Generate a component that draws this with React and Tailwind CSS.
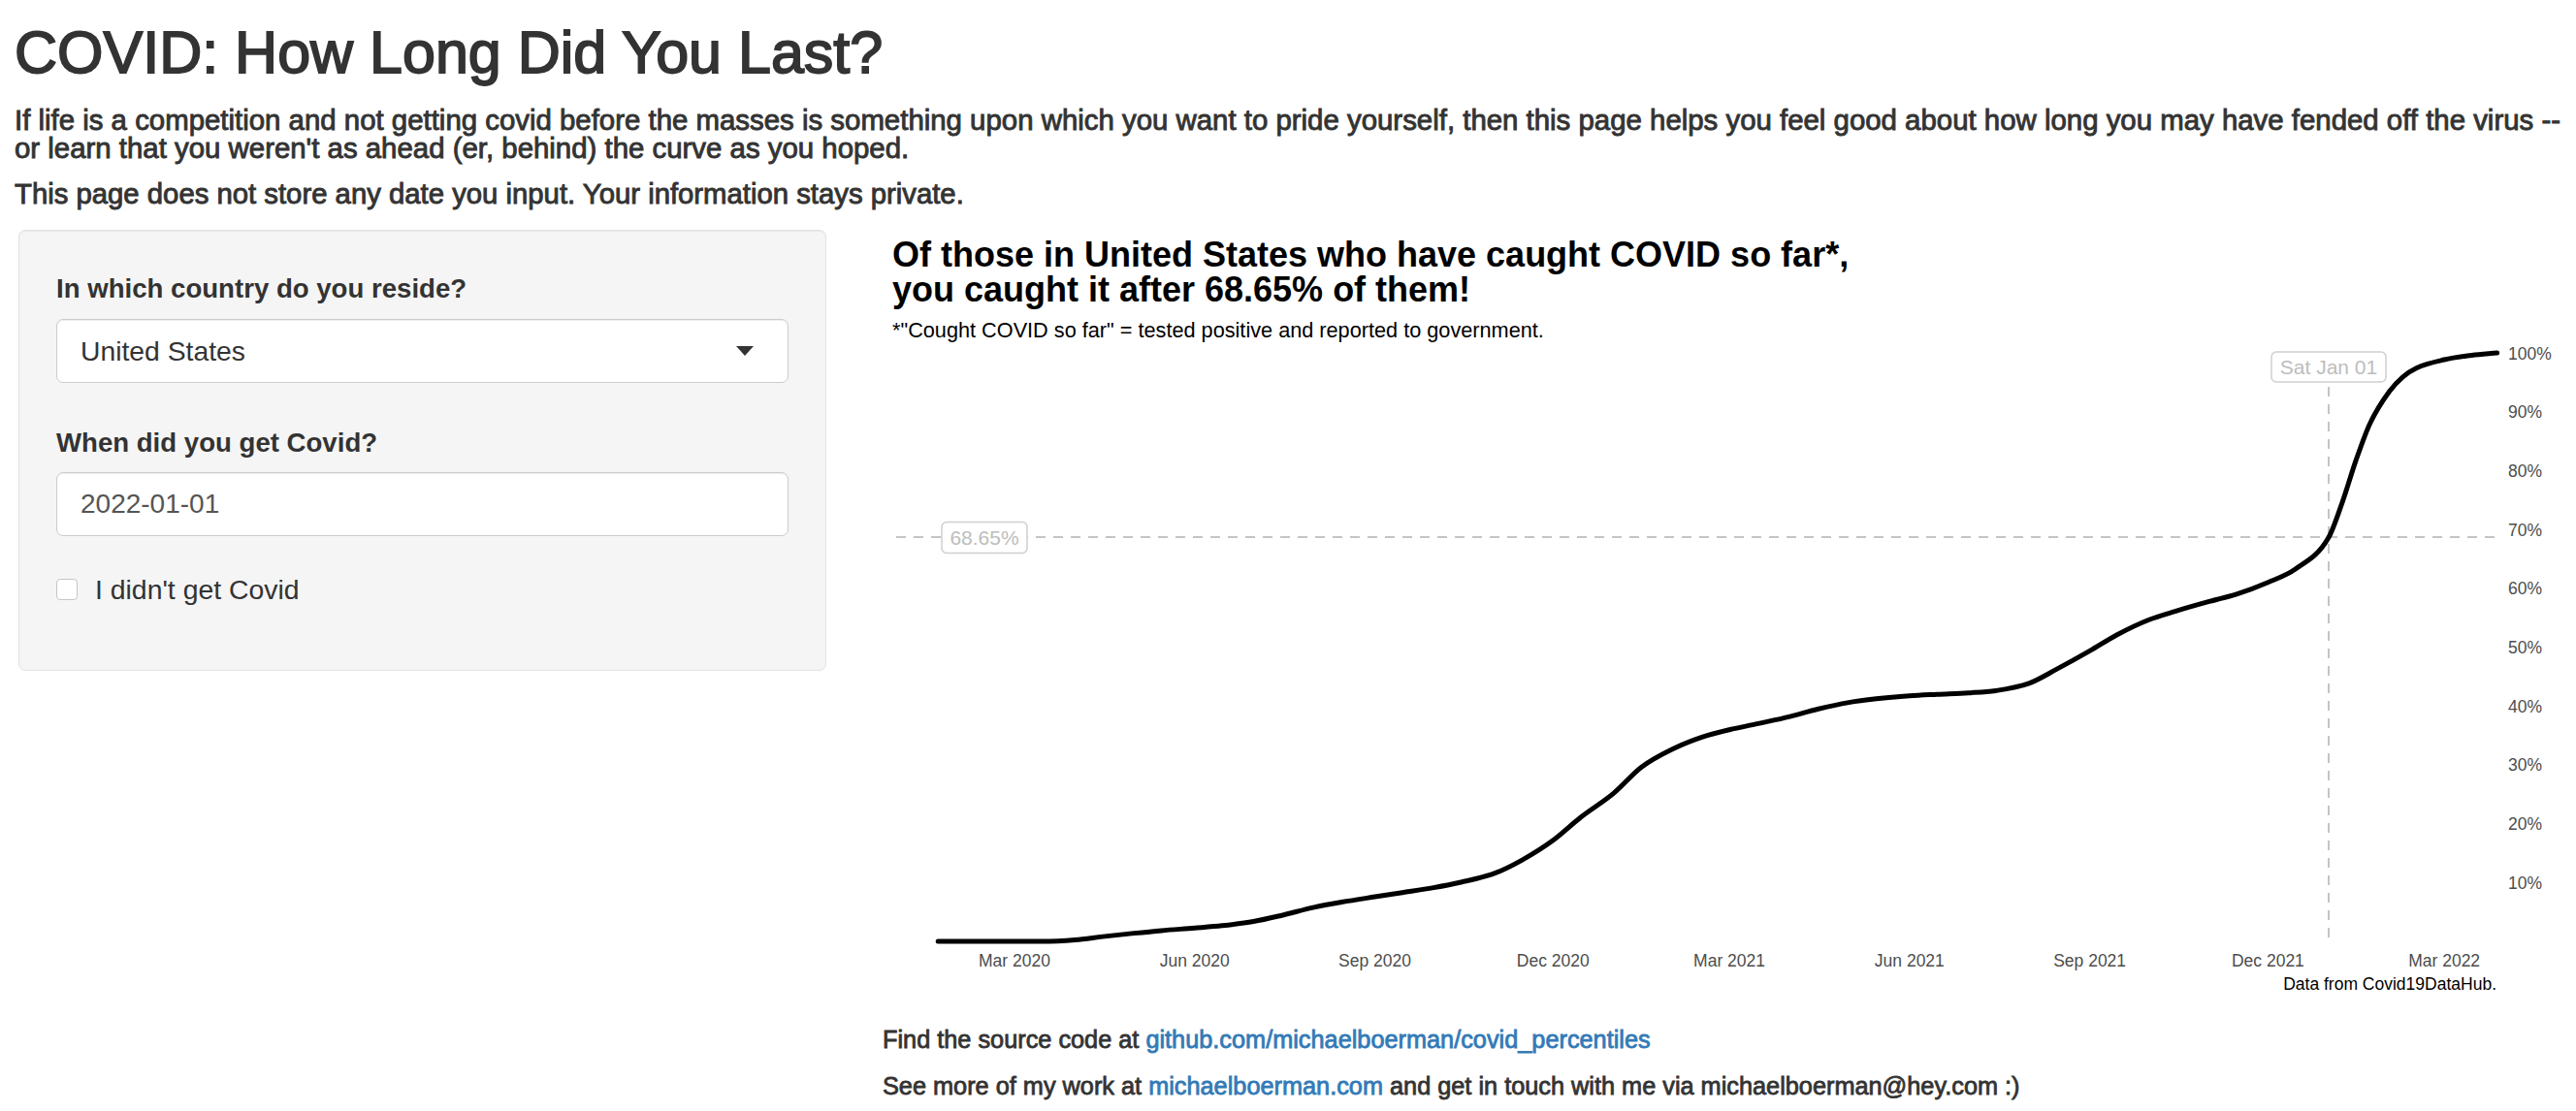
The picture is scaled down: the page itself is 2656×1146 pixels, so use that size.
import React from "react";

const FONT = "font-['Liberation_Sans','Helvetica_Neue',Arial,sans-serif]";

// US cumulative confirmed cases (millions), semi-monthly anchors
const CASES = [
  ["2020-01-22", 0], ["2020-03-01", 0.0001], ["2020-03-15", 0.004], ["2020-04-01", 0.21],
  ["2020-04-15", 0.64], ["2020-05-01", 1.1], ["2020-05-15", 1.46], ["2020-06-01", 1.81],
  ["2020-06-15", 2.13], ["2020-07-01", 2.69], ["2020-07-15", 3.49], ["2020-08-01", 4.62],
  ["2020-08-15", 5.32], ["2020-09-01", 6.04], ["2020-09-15", 6.61], ["2020-10-01", 7.28],
  ["2020-10-15", 8.02], ["2020-11-01", 9.21], ["2020-11-15", 11.0], ["2020-12-01", 13.7],
  ["2020-12-15", 16.8], ["2021-01-01", 20.1], ["2021-01-15", 23.6], ["2021-02-01", 26.2],
  ["2021-02-15", 27.7], ["2021-03-01", 28.7], ["2021-03-15", 29.5], ["2021-04-01", 30.5],
  ["2021-04-15", 31.5], ["2021-05-01", 32.4], ["2021-05-15", 32.9], ["2021-06-01", 33.3],
  ["2021-06-15", 33.5], ["2021-07-01", 33.7], ["2021-07-15", 34.0], ["2021-08-01", 35.0],
  ["2021-08-15", 36.9], ["2021-09-01", 39.4], ["2021-09-15", 41.6], ["2021-10-01", 43.6],
  ["2021-10-15", 44.8], ["2021-11-01", 46.1], ["2021-11-15", 47.1], ["2021-12-01", 48.7],
  ["2021-12-15", 50.5], ["2022-01-01", 54.8], ["2022-01-08", 59.6], ["2022-01-15", 65.3],
  ["2022-01-22", 70.2], ["2022-02-01", 74.6], ["2022-02-08", 76.6], ["2022-02-15", 77.8],
  ["2022-03-01", 78.9], ["2022-03-15", 79.5], ["2022-03-28", 79.825],
];

const DAY = 86400000;
const T0 = Date.parse("2022-01-01");
const TOTAL = 79.825;
const xOf = (d) => 2402 + ((Date.parse(d) - T0) / DAY) * 2.0194;
const yOf = (pct) => 972 - pct * 6.07;

// monotone cubic through the anchors, so the line never dips
function curvePath() {
  const xs = CASES.map(([d]) => xOf(d));
  const ys = CASES.map(([, v]) => yOf((v / TOTAL) * 100));
  const n = xs.length;
  const d = [];
  for (let i = 0; i < n - 1; i++) d.push((ys[i + 1] - ys[i]) / (xs[i + 1] - xs[i]));
  const m = new Array(n);
  m[0] = d[0];
  m[n - 1] = d[n - 2];
  for (let i = 1; i < n - 1; i++) m[i] = d[i - 1] * d[i] <= 0 ? 0 : (d[i - 1] + d[i]) / 2;
  for (let i = 0; i < n - 1; i++) {
    if (d[i] === 0) { m[i] = 0; m[i + 1] = 0; continue; }
    const a = m[i] / d[i], b = m[i + 1] / d[i], s = a * a + b * b;
    if (s > 9) { const t = 3 / Math.sqrt(s); m[i] = t * a * d[i]; m[i + 1] = t * b * d[i]; }
  }
  let p = `M${xs[0]},${ys[0]}`;
  for (let i = 0; i < n - 1; i++) {
    const h = xs[i + 1] - xs[i];
    p += ` C${xs[i] + h / 3},${ys[i] + (m[i] * h) / 3} ${xs[i + 1] - h / 3},${ys[i + 1] - (m[i + 1] * h) / 3} ${xs[i + 1]},${ys[i + 1]}`;
  }
  return p;
}

const X_TICKS = [
  ["Mar 2020", "2020-03-01"], ["Jun 2020", "2020-06-01"], ["Sep 2020", "2020-09-01"],
  ["Dec 2020", "2020-12-01"], ["Mar 2021", "2021-03-01"], ["Jun 2021", "2021-06-01"],
  ["Sep 2021", "2021-09-01"], ["Dec 2021", "2021-12-01"], ["Mar 2022", "2022-03-01"],
];

function Chart() {
  return (
    <svg width="1728" height="680" viewBox="911 355 1728 680" className="block">
      <g fontFamily="'Liberation Sans', Arial, sans-serif">
        <line x1="925" y1="555" x2="2575" y2="555" stroke="#c4c4c4" strokeWidth="2" strokeDasharray="10 8" />
        <line x1="2402" y1="400" x2="2402" y2="972" stroke="#c4c4c4" strokeWidth="2" strokeDasharray="10 8" />
        <path d={curvePath()} fill="none" stroke="#000" strokeWidth="5" strokeLinejoin="round" strokeLinecap="round" />

        <rect x="972" y="539.5" width="88" height="32" rx="5" fill="#fff" stroke="#cfcfcf" strokeWidth="1.5" />
        <text x="1016" y="563" textAnchor="middle" fontSize="21" fill="#bdbdbd">68.65%</text>
        <rect x="2343" y="364" width="118" height="31" rx="5" fill="#fff" stroke="#cfcfcf" strokeWidth="1.5" />
        <text x="2402" y="387" textAnchor="middle" fontSize="21" fill="#bdbdbd">Sat Jan 01</text>

        {[100, 90, 80, 70, 60, 50, 40, 30, 20, 10].map((v) => (
          <text key={v} x="2587" y={yOf(v) + 6.5} fontSize="17.5" fill="#4d4d4d">{v}%</text>
        ))}
        {X_TICKS.map(([label, d]) => (
          <text key={label} x={xOf(d)} y="998" textAnchor="middle" fontSize="17.5" fill="#4d4d4d">{label}</text>
        ))}
        <text x="2575" y="1022" textAnchor="end" fontSize="17.5" fill="#000">Data from Covid19DataHub.</text>
      </g>
    </svg>
  );
}

export default function App() {
  return (
    <div className={`${FONT} text-[#333] bg-white w-[2656px] h-[1146px] overflow-hidden px-[15px]`}>
      <h1 className="text-[61px] leading-[1.1] pt-[21px] whitespace-nowrap [-webkit-text-stroke:1.8px_#333]">
        COVID: How Long Did You Last?
      </h1>

      <p className="text-[29.4px] leading-[29px] mt-[21px] whitespace-nowrap [-webkit-text-stroke:0.9px_#333]">
        If life is a competition and not getting covid before the masses is something upon which you want to pride yourself, then this page helps you feel good about how long you may have fended off the virus --
        <br />
        or learn that you weren't as ahead (er, behind) the curve as you hoped.
      </p>
      <p className="text-[29.3px] leading-[29px] mt-[18px] whitespace-nowrap [-webkit-text-stroke:0.9px_#333]">
        This page does not store any date you input. Your information stays private.
      </p>

      <div className="flex items-start mt-[23px]">
        <div className="ml-[4px] w-[833px] h-[455px] shrink-0 bg-[#f5f5f5] border border-[#e3e3e3] rounded-[7px] shadow-[inset_0_1px_1px_rgba(0,0,0,0.05)] px-[38px] pt-[45px]">
          <label className="block text-[27.6px] leading-[30px] font-bold">In which country do you reside?</label>
          <div className="mt-[16px] h-[66px] bg-white border border-[#cccccc] rounded-[7px] flex items-center justify-between pl-[24px] pr-[35px] shadow-[inset_0_1px_1px_rgba(0,0,0,0.075)]">
            <span className="text-[28.3px]">United States</span>
            <svg width="18" height="10" viewBox="0 0 18 10"><polygon points="0,0 18,0 9,10" fill="#333" /></svg>
          </div>

          <label className="block mt-[47px] text-[27.6px] leading-[30px] font-bold">When did you get Covid?</label>
          <div className="mt-[15px] h-[66px] bg-white border border-[#cccccc] rounded-[7px] flex items-center pl-[24px] shadow-[inset_0_1px_1px_rgba(0,0,0,0.075)]">
            <span className="text-[28px] text-[#555]">2022-01-01</span>
          </div>

          <div className="mt-[40px] flex items-center">
            <span className="block w-[22px] h-[22px] bg-white border border-[#c6c6c6] rounded-[4px]" />
            <span className="ml-[18px] text-[28.4px] leading-[30px]">I didn't get Covid</span>
          </div>
        </div>

        <div className="ml-[58px] flex-1">
          <div className="ml-[10px] pt-[8px] text-black">
            <div className="text-[36px] leading-[36px] font-bold whitespace-nowrap">
              Of those in United States who have caught COVID so far*,
              <br />
              you caught it after 68.65% of them!
            </div>
            <div className="mt-[11px] text-[21.7px] leading-[26px] whitespace-nowrap">
              *"Cought COVID so far" = tested positive and reported to government.
            </div>
          </div>
          <Chart />
          <p className="mt-[20px] text-[25.3px] leading-[36px] whitespace-nowrap [-webkit-text-stroke:0.8px_#333]">
            Find the source code at <a className="text-[#337ab7] [-webkit-text-stroke:0.8px_#337ab7]">github.com/michaelboerman/covid_percentiles</a>
          </p>
          <p className="mt-[12px] text-[25.3px] leading-[36px] whitespace-nowrap [-webkit-text-stroke:0.8px_#333]">
            See more of my work at <a className="text-[#337ab7] [-webkit-text-stroke:0.8px_#337ab7]">michaelboerman.com</a> and get in touch with me via michaelboerman@hey.com :)
          </p>
        </div>
      </div>
    </div>
  );
}
